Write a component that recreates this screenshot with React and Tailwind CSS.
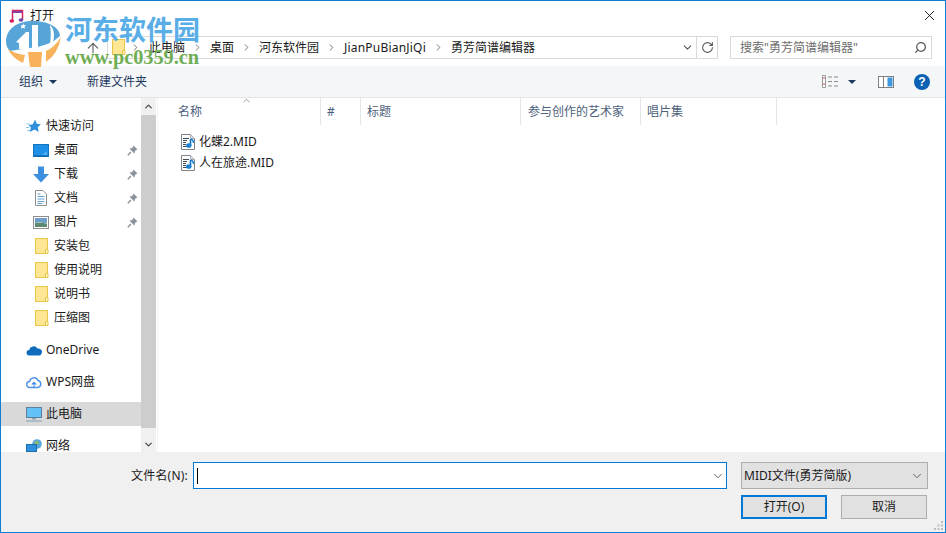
import React from "react";
import { ChevronDown, ChevronRight, ChevronUp, ArrowUp, RotateCw, Search, X } from "lucide-react";

const Folder = ({ className = "" }) => (
  <svg width="14" height="17" viewBox="0 0 14 17" className={className}>
    <rect x="0.500" y="0.500" width="12" height="15" fill="#fee695" stroke="#e8c648" />
    <path d="M10.500 15.500v-4h2.500v4z" fill="#fff3c4" stroke="#e8c648" />
  </svg>
);

const Pin = () => (
  <svg width="11" height="11" viewBox="0 0 11 11">
    <path d="M6.500 0.500 10.500 4.500 9.200 5 7.800 6.200 7.500 8.700 2.300 3.500 4.800 3.200 6 1.800z" fill="#8b949c" />
    <path d="M4 7 0.800 10.200" stroke="#8b949c" strokeWidth="1.300" />
  </svg>
);

const MidiIcon = () => (
  <svg width="14" height="16" viewBox="0 0 14 16">
    <path d="M0.500 0.500h9l4 4v11h-13z" fill="#fff" stroke="#7d838a" />
    <path d="M9.500 0.500v4h4" fill="#dfe6ee" stroke="#a8adb3" />
    <path d="M2 4.500h6M2 6.500h4M2 8.500h3M2 10.500h3M2 12.500h4" stroke="#3f4a57" strokeWidth="1" />
    <path d="M9.500 5v6.500" stroke="#1574c4" strokeWidth="1.600" />
    <ellipse cx="7.800" cy="11.500" rx="2.700" ry="2.300" fill="#1b82d6" />
    <path d="M10 5c1.800 .6 2.500 1.500 2.500 4" stroke="#1b82d6" strokeWidth="1.400" fill="none" />
  </svg>
);

const icons = {
  star: (
    <svg width="15" height="14" viewBox="0 0 15 14">
      <path d="M9 0.500 10.800 4.800 14.800 5.300 11.800 8.200 12.700 13 8.600 10.500 3.600 13 5 8.400 2.500 6.200 6.800 5.200z" fill="#2f8fdd" />
      <path d="M0.500 5H4M0 8.500h3.500M1 11.500h3" stroke="#8cc5ef" strokeWidth="1" />
    </svg>
  ),
  desktop: (
    <svg width="16" height="13" viewBox="0 0 16 13">
      <rect x="0.500" y="0.500" width="15" height="12" fill="#1e90e8" stroke="#1474bd" />
      <path d="M1 12h14" stroke="#0e5d9c" />
      <path d="M9 11l5-4v4z" fill="#4fb1f2" />
    </svg>
  ),
  download: (
    <svg width="16" height="17" viewBox="0 0 16 17">
      <path d="M5 0.500h6V8h5L8 16.500 0 8h5z" fill="#3d8fe0" />
    </svg>
  ),
  doc: (
    <svg width="12" height="16" viewBox="0 0 12 16">
      <path d="M0.500 0.500h7.500l3.500 3.500v11.500h-11z" fill="#fff" stroke="#8f8f8f" />
      <path d="M2.500 4h3M2.500 6.500h7M2.500 9h7M2.500 11.500h7M2.500 13.500h5" stroke="#5f9fd0" />
    </svg>
  ),
  picture: (
    <svg width="16" height="13" viewBox="0 0 16 13">
      <rect x="0.500" y="0.500" width="15" height="12" fill="#fff" stroke="#8f8f8f" />
      <rect x="2" y="2" width="12" height="5" fill="#6f9fc9" />
      <rect x="2" y="7" width="12" height="4" fill="#5d8a6f" />
      <path d="M2 7c3-1.500 6-1 12 1v-1z" fill="#b8d4c0" />
    </svg>
  ),
  onedrive: (
    <svg width="16" height="11" viewBox="0 0 16 11">
      <path d="M3.500 10.500a2.800 2.800 0 0 1-.3-5.600A4.500 4.500 0 0 1 11.500 3.600a3.500 3.500 0 0 1 3.800 5.400c-.6 1-1.500 1.500-2.500 1.500z" fill="#0f6cbd" />
    </svg>
  ),
  wps: (
    <svg width="16" height="14" viewBox="0 0 16 14">
      <path d="M4 12.500a3 3 0 0 1-.4-6A4.400 4.400 0 0 1 12 5.500a3.600 3.600 0 0 1 0 7z" fill="#fff" stroke="#4a90e8" strokeWidth="1.400" />
      <path d="M8 12.500V7.500M5.800 9.500 8 7.300l2.200 2.200" fill="none" stroke="#4a90e8" strokeWidth="1.200" />
    </svg>
  ),
  pc: (
    <svg width="16" height="15" viewBox="0 0 16 15">
      <rect x="0.500" y="0.500" width="15" height="10" fill="#62c1f5" stroke="#5b7f9c" />
      <path d="M6 11h4v1.500H6z" fill="#8aa3b8" />
      <path d="M0 14h16" stroke="#8fa8bd" strokeWidth="1.200" />
    </svg>
  ),
  network: (
    <svg width="16" height="14" viewBox="0 0 16 14">
      <circle cx="11" cy="5" r="4.800" fill="#5aa7dd" />
      <path d="M8 3c2-2 5-1 5 1s-2 1-3 3z" fill="#8dbb6c" />
      <rect x="0.500" y="5.500" width="10" height="7" fill="#2f8fdd" stroke="#1d6cab" />
      <path d="M0 13.500h11" stroke="#1d6cab" />
    </svg>
  ),
};

const pinned = [
  ["桌面", "desktop"],
  ["下载", "download"],
  ["文档", "doc"],
  ["图片", "picture"],
];
const folders = ["安装包", "使用说明", "说明书", "压缩图"];
const crumbs = ["此电脑", "桌面", "河东软件园", "JianPuBianJiQi", "勇芳简谱编辑器"];
const columns = [
  ["名称", "w-[163px] pl-[20px]"],
  ["#", "w-[40px] pl-[6px]"],
  ["标题", "w-[160px] pl-[6px]"],
  ["参与创作的艺术家", "w-[120px] pl-[7px]"],
  ["唱片集", "w-[136px] pl-[6px]"],
];
const files = ["化蝶2.MID", "人在旅途.MID"];

function TopRow({ icon, label, selected, className = "" }) {
  return (
    <div className={`h-[24px] flex items-center pl-[24px] gap-[4px] ${selected ? "bg-[#d9d9d9]" : ""} ${className}`}>
      <span className="w-[17px] flex justify-center">{icons[icon]}</span>
      <span>{label}</span>
    </div>
  );
}

// site watermark stamped over the top-left corner
function Watermark() {
  return (
    <div className="absolute left-[3px] top-[13px] w-[200px] h-[54px] pointer-events-none">
      <svg width="58" height="54" viewBox="4 14 58 54" className="absolute left-0 top-0">
        <path d="M6 42C6 29 17 21 33 21S60 28 60 36Q50 46 30 48Q15 50 10 51Q6 47 6 42Z" fill="#57a5d8" />
        <path d="M16 42 26 32h3v17H19v-6z" fill="#fff" />
        <path d="M32 25h6v24h-6z" fill="#fff" />
        <path d="M50 25c4 4 5 10 3 17l-3 2c1-6 1-13 0-19z" fill="#fff" />
        <path d="M23 23l1 2 2 .3-1.500 1.400.4 2-1.900-1-1.900 1 .4-2L21 25.300l2-.3z" fill="#fff" />
        <path d="M8 49Q12 58 23 63L25 55Q15 54 8 49z" fill="#f8b25c" />
        <path d="M28 52h14l-1 15H30z" fill="#f8b25c" />
        <path d="M46 62Q58 54 61 37Q55 47 46 51z" fill="#f8b25c" />
      </svg>
      <span className="absolute left-[61px] top-[-3px] font-['Noto_Sans_CJK_SC',sans-serif] font-bold text-[27px] leading-[36px] text-[#5aaee8] whitespace-nowrap">
        河东软件园
      </span>
      <span className="absolute left-[61px] top-[32px] font-['Liberation_Serif',serif] font-bold text-[20.300px] leading-[22px] text-[#6fae55] whitespace-nowrap">
        www.pc0359.cn
      </span>
    </div>
  );
}

export default function App() {
  return (
    <div className="relative w-[946px] h-[533px] overflow-hidden bg-white border border-[#0f7fd6] flex flex-col text-[12px] text-[#1a1a1a] font-['Noto_Sans','Noto_Sans_CJK_SC',sans-serif]">
      {/* title bar */}
      <div className="h-[31px] flex items-center shrink-0 pl-[8px] pr-[7px] pb-[2px]">
        <svg width="16" height="16" viewBox="0 0 16 16">
          <path d="M3.500 13V2.500h10V12" fill="none" stroke="#d3245f" strokeWidth="1.500" />
          <path d="M3.500 4h10" stroke="#8a3fa0" strokeWidth="2" />
          <ellipse cx="2.800" cy="13" rx="2.300" ry="1.800" fill="#d81b60" />
          <ellipse cx="12" cy="12" rx="2.300" ry="1.800" fill="#6a4bb5" />
        </svg>
        <span className="ml-[5px]">打开</span>
        <X size={17} strokeWidth={1.200} className="ml-auto text-black" />
      </div>

      {/* nav row */}
      <div className="h-[34px] shrink-0 flex items-start pt-[4px] pl-[84px] pr-[12px]">
        <ArrowUp size={16} strokeWidth={1.800} className="text-[#6b6b6b] mt-[4px]" />
        <div className="ml-[6px] w-[611px] h-[23px] border border-[#d9d9d9] flex items-center bg-white">
          <Folder className="ml-[4px]" />
          <div className="flex items-center ml-[4px]">
            <ChevronRight size={11} strokeWidth={2} className="text-[#6e6e6e] mr-[8px]" />
            {crumbs.map((c, i) => (
              <React.Fragment key={c}>
                <span className={c === "JianPuBianJiQi" ? "whitespace-nowrap tracking-[0.200px]" : "whitespace-nowrap"}>{c}</span>
                {i < crumbs.length - 1 && (
                  <ChevronRight size={11} strokeWidth={2} className="text-[#6e6e6e] mx-[7px]" />
                )}
              </React.Fragment>
            ))}
          </div>
          <ChevronDown size={13} strokeWidth={2} className="ml-auto mr-[2px] text-[#5a5a5a]" />
          <div className="w-[21px] h-full border-l border-[#d9d9d9] flex items-center justify-center pl-[1px]">
            <RotateCw size={13} strokeWidth={2} className="text-[#5a5a5a]" />
          </div>
        </div>
        <div className="ml-[12px] w-[202px] h-[23px] border border-[#d9d9d9] flex items-center pl-[9px] pr-[4px] text-[#6d6d6d]">
          <span>搜索"勇芳简谱编辑器"</span>
          <Search size={13} strokeWidth={2.400} className="ml-auto -scale-x-100 text-[#5a5a5a]" />
        </div>
      </div>

      {/* toolbar */}
      <div className="h-[32px] shrink-0 bg-[#f5f6f7] border-b border-[#e5e5e5] flex items-center pl-[18px] pr-[15px] text-[#1e3a5f]">
        <span>组织</span>
        <span className="ml-[6px] w-0 h-0 border-x-[4px] border-x-transparent border-t-[4px] border-t-[#1e3a5f]" />
        <span className="ml-[30px]">新建文件夹</span>
        <svg width="17" height="13" viewBox="0 0 17 13" className="ml-auto">
          <path d="M0.500 0.500h3v12h-3z" fill="#fff" stroke="#9a9a9a" />
          <path d="M1 3h2M1 9h2" stroke="#d04a4a" />
          <path d="M6 2h4M12 2h4M6 6.500h4M12 6.500h4M6 11h4M12 11h4" stroke="#8a8a8a" />
        </svg>
        <span className="ml-[9px] w-0 h-0 border-x-[4px] border-x-transparent border-t-[4px] border-t-[#1e3a5f]" />
        <svg width="16" height="12" viewBox="0 0 16 12" className="ml-[22px]">
          <rect x="0.500" y="0.500" width="15" height="11" fill="#fff" stroke="#808080" />
          <rect x="9.500" y="1.500" width="5" height="9" fill="#3f97dd" />
          <path d="M5.500 1v10" stroke="#808080" />
        </svg>
        <div className="ml-[20px] w-[16px] h-[16px] rounded-full bg-[#0b62b5] flex items-center justify-center text-white font-bold text-[12px] leading-none font-['Liberation_Sans',sans-serif]">
          ?
        </div>
      </div>

      {/* body */}
      <div className="h-[354px] shrink-0 flex overflow-hidden">
        <div className="w-[140px] shrink-0 pt-[16px]">
          <TopRow icon="star" label="快速访问" />
          {pinned.map(([label, icon]) => (
            <div key={label} className="h-[24px] flex items-center pl-[31px] pr-[3px]">
              <span className="w-[17px] flex justify-center">{icons[icon]}</span>
              <span className="ml-[5px]">{label}</span>
              <span className="ml-auto flex">
                <Pin />
              </span>
            </div>
          ))}
          {folders.map((label) => (
            <div key={label} className="h-[24px] flex items-center pl-[34px]">
              <Folder />
              <span className="ml-[5px]">{label}</span>
            </div>
          ))}
          <TopRow icon="onedrive" label="OneDrive" className="mt-[8px]" />
          <TopRow icon="wps" label="WPS网盘" className="mt-[8px]" />
          <TopRow icon="pc" label="此电脑" selected className="mt-[8px]" />
          <TopRow icon="network" label="网络" className="mt-[8px]" />
        </div>

        {/* sidebar scrollbar */}
        <div className="w-[15px] shrink-0 bg-[#f0f0f0] flex flex-col">
          <div className="h-[17px] flex items-center justify-center">
            <ChevronUp size={11} strokeWidth={3} className="text-[#505050]" />
          </div>
          <div className="h-[313px] bg-[#cdcdcd]" />
          <div className="mt-auto h-[16px] flex items-center justify-center">
            <ChevronDown size={11} strokeWidth={3} className="text-[#505050]" />
          </div>
        </div>

        {/* file list */}
        <div className="flex-1 ml-[1px] border-l border-[#f3f3f3] relative">
          <div className="h-[27px] flex text-[#4c607a]">
            {columns.map(([label, cls]) => (
              <div key={label} className={`${cls} border-r border-[#e5e5e5] flex items-center shrink-0`}>
                {label}
              </div>
            ))}
          </div>
          <ChevronUp size={11} strokeWidth={1.500} className="absolute left-[83px] top-[-3px] text-[#6e6e6e]" />
          <div className="pt-[6px] pl-[23px]">
            {files.map((f) => (
              <div key={f} className="h-[21px] flex items-center gap-[4px]">
                <MidiIcon />
                <span>{f}</span>
              </div>
            ))}
          </div>
        </div>
      </div>

      {/* footer */}
      <div className="flex-1 bg-[#f0f0f0] relative pt-[10px] pl-[130px] pr-[17px]">
        <div className="flex items-center h-[27px]">
          <span className="w-[62px] tracking-[0.200px]">文件名(N):</span>
          <div className="w-[534px] h-full bg-white border border-[#0078d7] flex items-center pl-[3px]">
            <span className="w-px h-[16px] bg-black" />
            <ChevronDown size={14} strokeWidth={1.500} className="ml-auto mr-[1px] text-[#505050]" />
          </div>
          <div className="ml-[14px] w-[187px] h-full bg-[#e1e1e1] border border-[#adadad] flex items-center pl-[2px] pr-[3px]">
            <span>MIDI文件(勇芳简版)</span>
            <ChevronDown size={14} strokeWidth={1.500} className="ml-auto text-[#505050]" />
          </div>
        </div>
        <div className="flex justify-end gap-[14px] mt-[6px] pr-[1px]">
          <div className="w-[86px] h-[24px] bg-[#e1e1e1] border-2 border-[#0078d7] flex items-center justify-center">
            打开(O)
          </div>
          <div className="w-[86px] h-[24px] bg-[#e1e1e1] border border-[#adadad] flex items-center justify-center">
            取消
          </div>
        </div>
        <svg width="11" height="11" viewBox="0 0 11 11" className="absolute right-[1px] bottom-[1px]">
          <path d="M8 1h2v2H8zM4.500 4.500h2v2h-2zM8 4.500h2v2H8zM1 8h2v2H1zM4.500 8h2v2h-2zM8 8h2v2H8z" fill="#bdbdbd" />
        </svg>
      </div>

      <Watermark />
    </div>
  );
}
